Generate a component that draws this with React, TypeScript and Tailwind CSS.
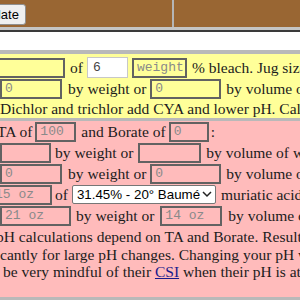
const serif = { fontFamily: '"Liberation Serif", "Times New Roman", serif' };

function Field({ w, value, className = "" }: { w: string; value?: string; className?: string }) {
  return (
    <div
      className={`h-[20px] shrink-0 border-2 border-[#626262] bg-transparent pl-[3px] font-['Liberation_Mono',monospace] text-[13px] leading-[16px] text-[#8a8a8a] ${w} ${className}`}
    >
      {value}
    </div>
  );
}

export default function App() {
  return (
    <div className="h-[300px] w-[300px] overflow-hidden bg-white text-[15.5px] text-[#1c1c1c]" style={serif}>
      {/* header bar */}
      <div className="flex h-[27px] bg-[#996633]">
        <div className="flex w-[172px] shrink-0 items-center">
          <button className="-ml-[30px] mt-[2px] h-[21px] rounded-[3px] border border-[#8f8f8f] bg-[#efefef] px-[6px] font-['Liberation_Sans',Arial,sans-serif] text-[13px] text-black">
            Update
          </button>
        </div>
        <div className="w-[2px] bg-[#b5b5b5]" />
      </div>
      <div className="h-[3px] bg-[#c4c4c4]" />
      <div className="h-[20px] border-t-2 border-[#3a3a3a] bg-white" />
      <div className="h-[4px] bg-[#b9b9b9]" />

      {/* bleach section */}
      <div className="flex h-[64px] flex-col bg-[#ffff99] pt-[3px] whitespace-nowrap">
        <div className="flex h-[21px] items-center">
          <Field w="w-[70px]" className="-ml-[5px]" />
          <span className="ml-[5px]">of</span>
          <div className="ml-[4px] h-[21px] w-[41px] shrink-0 border border-[#c8c8c8] bg-white pl-[5px] font-['Liberation_Mono',monospace] text-[13px] leading-[19px] text-[#444]">
            6
          </div>
          <Field w="w-[55px]" value="weight" className="ml-[4px] text-[#6b6b4a]" />
          <span className="ml-[5px]">% bleach. Jug size</span>
        </div>
        <div className="flex h-[21px] items-center">
          <Field w="w-[62px]" value="0" />
          <span className="ml-[6px]">by weight or</span>
          <Field w="w-[71px]" value="0" className="ml-[4px]" />
          <span className="ml-[5px]">by volume of</span>
        </div>
        <div className="h-[19px] leading-[19px]">Dichlor and trichlor add CYA and lower pH. Cal-</div>
      </div>
      <div className="h-[3px] bg-[#b9b9b9]" />

      {/* acid section */}
      <div className="flex h-[176px] flex-col bg-[#ffbbbb] whitespace-nowrap">
        <div className="flex h-[21px] items-center">
          <span className="-ml-[3px]">TA of</span>
          <Field w="w-[41px]" value="100" className="ml-[3px] h-[19px]" />
          <span className="ml-[5px]">and Borate of</span>
          <Field w="w-[40px]" value="0" className="ml-[3px] h-[19px]" />
          <span className="ml-[2px]">:</span>
        </div>
        <div className="flex h-[21px] items-center">
          <Field w="w-[51px]" />
          <span className="ml-[4px]">by weight or</span>
          <Field w="w-[63px]" className="ml-[5px]" />
          <span className="ml-[5px]">by volume of wa</span>
        </div>
        <div className="flex h-[21px] items-center">
          <Field w="w-[62px]" value="0" />
          <span className="ml-[6px]">by weight or</span>
          <Field w="w-[71px]" value="0" className="ml-[4px]" />
          <span className="ml-[5px]">by volume of</span>
        </div>
        <div className="flex h-[21px] items-center">
          <Field w="w-[62px]" value="15 oz" className="-ml-[10px]" />
          <span className="ml-[3px]">of</span>
          <div className="ml-[4px] flex h-[19px] w-[144px] shrink-0 items-center justify-between rounded-[2px] border border-[#767676] bg-white pl-[4px] pr-[3px] font-['Liberation_Sans',Arial,sans-serif] text-[13.33px] text-black">
            <span>31.45% - 20° Baumé</span>
            <svg width="10" height="7" viewBox="0 0 10 7" fill="none" stroke="#222" strokeWidth="1.5">
              <path d="M1 1l4 4 4-4" />
            </svg>
          </div>
          <span className="ml-[5px]">muriatic acid</span>
        </div>
        <div className="flex h-[21px] items-center">
          <Field w="w-[71px]" value="21 oz" />
          <span className="ml-[5px]">by weight or</span>
          <Field w="w-[62px]" value="14 oz" className="ml-[6px]" />
          <span className="ml-[6px]">by volume of</span>
        </div>
        <div className="mt-[2px] leading-[17.5px]">
          <div className="-ml-[4px]">pH calculations depend on TA and Borate. Results</div>
          <div>cantly for large pH changes. Changing your pH w</div>
          <div className="ml-[3px]">
            be very mindful of their{" "}
            <a className="text-[#1a1a8c] underline" href="#">CSI</a> when their pH is at
          </div>
        </div>
      </div>
      <div className="h-[4px] bg-[#b9b9b9]" />
    </div>
  );
}
